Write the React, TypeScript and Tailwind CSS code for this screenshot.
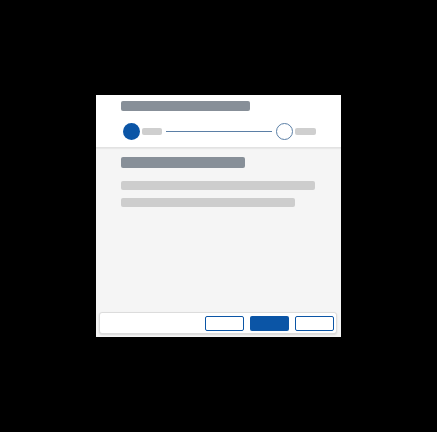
import React from 'react';

const App = () => {
  return (
    <div className="w-[437px] h-[432px] bg-black flex items-center justify-center">
      <div className="w-[245px] h-[242px] bg-[#f5f5f5] flex flex-col">
        {/* header with stepper */}
        <div className="h-[53px] bg-white border-b border-[#e2e2e2] shadow-[0_1px_1px_rgba(0,0,0,0.05)] pl-[25px] pt-[6px]">
          <div className="w-[129px] h-[10px] rounded-[2px] bg-[#878f98]" />
          <div className="mt-[12px] flex items-center h-[17px] pl-[2px]">
            <div className="w-[17px] h-[17px] rounded-full bg-[#0b55a6]" />
            <div className="ml-[2px] w-[20px] h-[7px] rounded-[2px] bg-[#cfcfcf]" />
            <div className="ml-[4px] w-[106px] h-px bg-[#5b7fa6]" />
            <div className="ml-[4px] w-[17px] h-[17px] rounded-full border border-[#5b7fa6] bg-white" />
            <div className="ml-[2px] w-[21px] h-[7px] rounded-[2px] bg-[#cfcfcf]" />
          </div>
        </div>

        <div className="flex-1 pl-[25px] pt-[9px]">
          <div className="w-[124px] h-[11px] rounded-[2px] bg-[#878f98]" />
          <div className="mt-[13px] w-[194px] h-[9px] rounded-[2px] bg-[#cdcdcd]" />
          <div className="mt-[8px] w-[174px] h-[9px] rounded-[2px] bg-[#cdcdcd]" />
        </div>

        {/* footer actions */}
        <div className="ml-[3px] mr-[4px] mb-[3px] h-[22px] bg-white border border-[#dcdcdc] rounded-[3px] shadow-[0_1px_2px_rgba(0,0,0,0.12)] flex items-center justify-end gap-[6px] pr-[2px]">
          <button className="w-[39px] h-[15px] rounded-[2px] border border-[#0b55a6] bg-white" />
          <button className="w-[39px] h-[15px] rounded-[2px] bg-[#0b55a6]" />
          <button className="w-[39px] h-[15px] rounded-[2px] border border-[#0b55a6] bg-white" />
        </div>
      </div>
    </div>
  );
};

export default App;
